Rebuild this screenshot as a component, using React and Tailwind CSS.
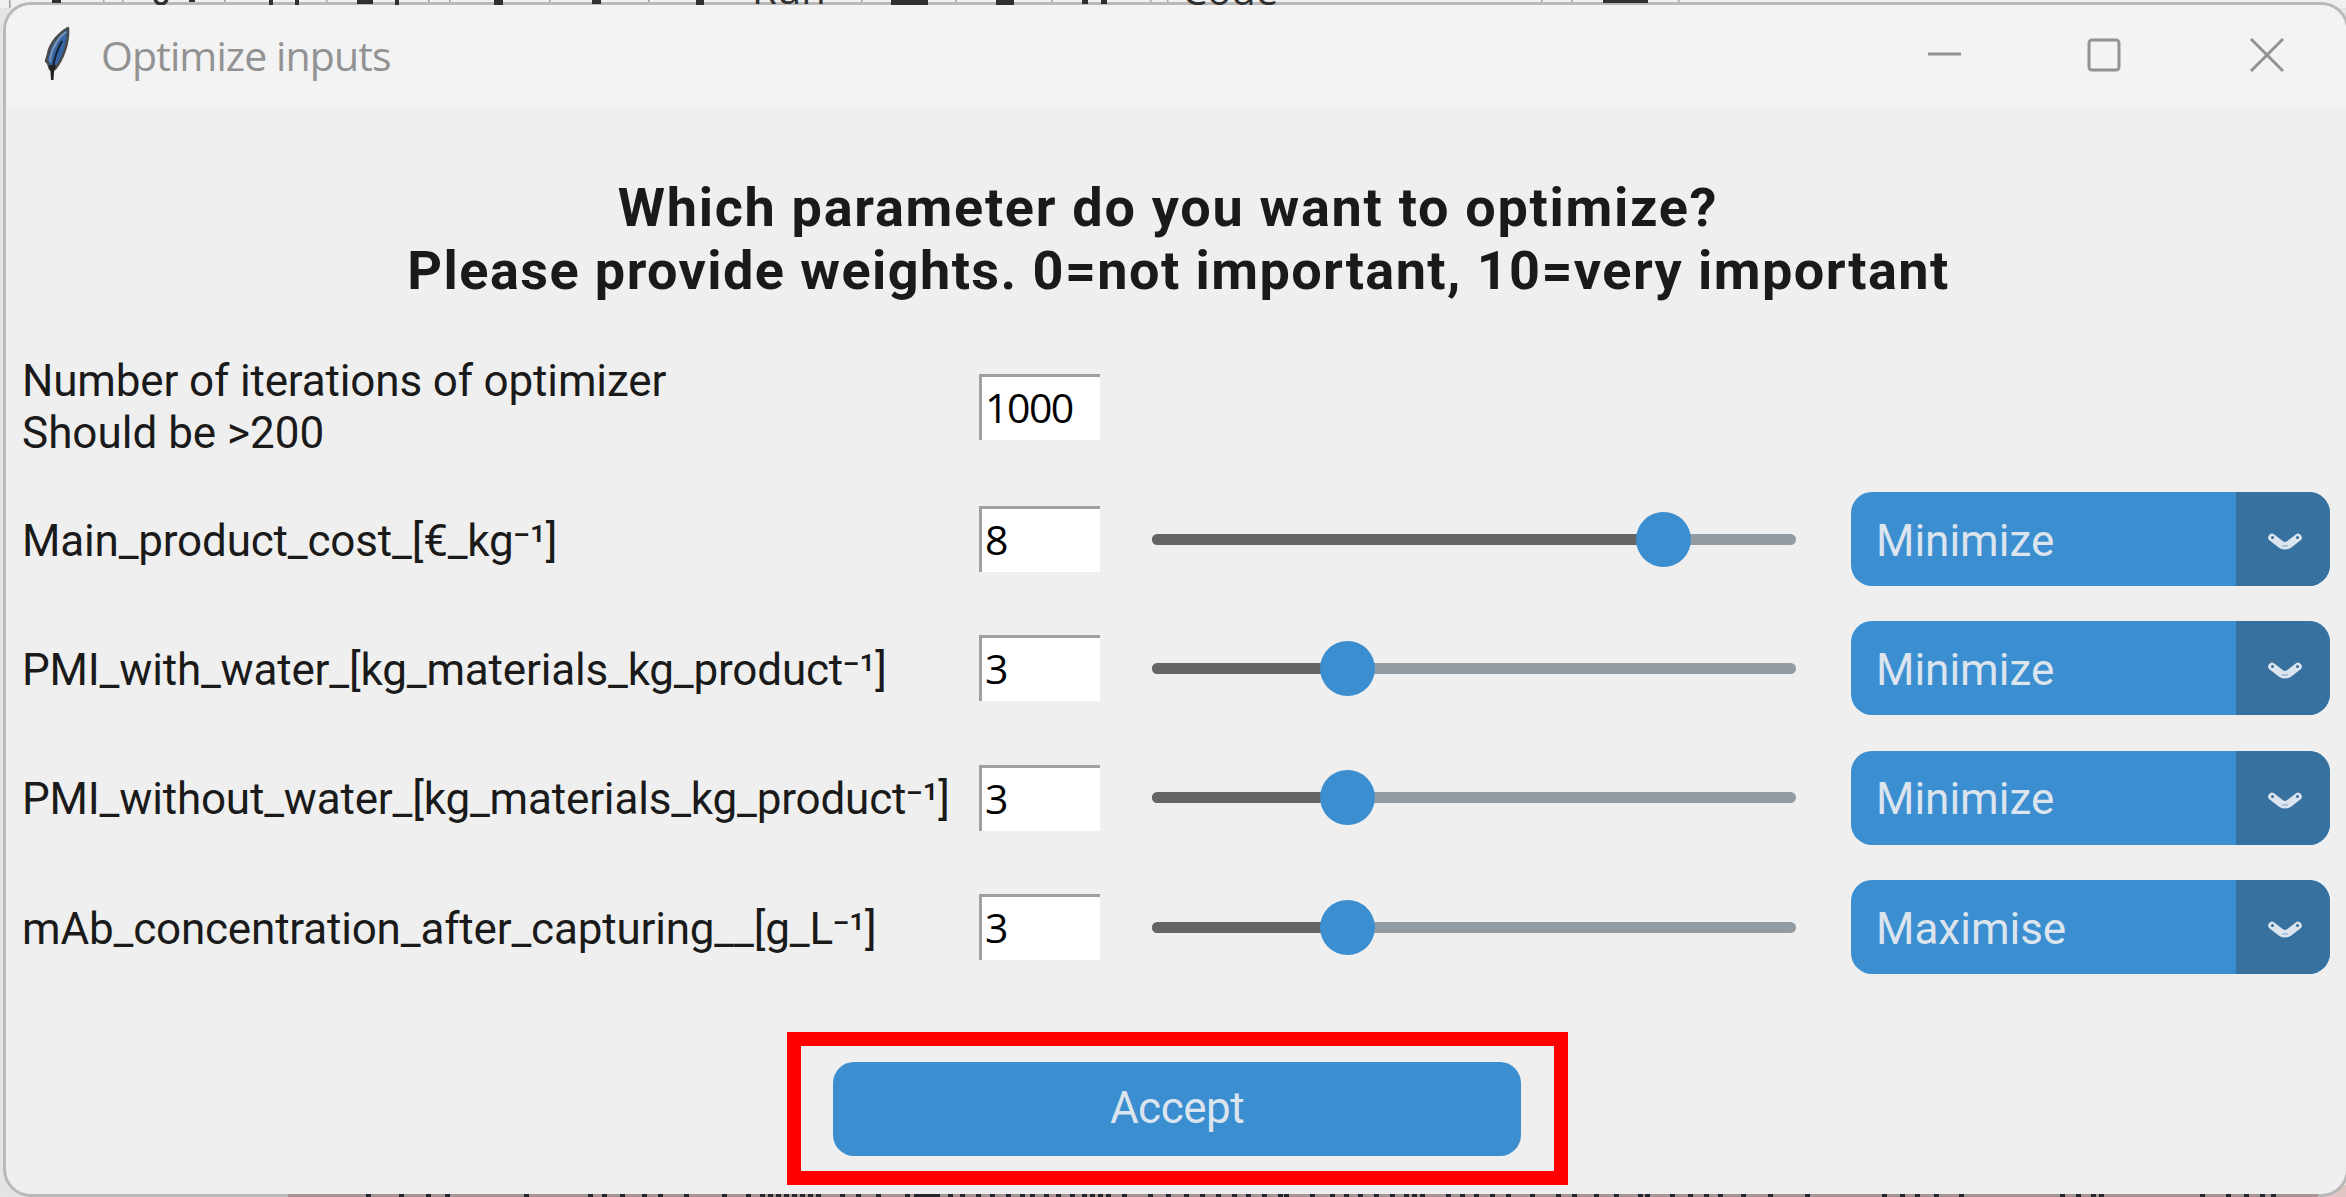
const rows = [
  { label: 'Main_product_cost_[€_kg⁻¹]', value: '8', left: 'left-[484px]', fill: 'w-[512px]', option: 'Minimize' },
  { label: 'PMI_with_water_[kg_materials_kg_product⁻¹]', value: '3', left: 'left-[168px]', fill: 'w-[195px]', option: 'Minimize' },
  { label: 'PMI_without_water_[kg_materials_kg_product⁻¹]', value: '3', left: 'left-[168px]', fill: 'w-[195px]', option: 'Minimize' },
  { label: 'mAb_concentration_after_capturing__[g_L⁻¹]', value: '3', left: 'left-[168px]', fill: 'w-[195px]', option: 'Maximise' },
];

// Vertical dividers of the toolbar that shows above the dialog.
const dividers = [9, 103, 122, 224, 326, 428, 449, 549, 648, 861, 955, 1051, 1150, 1167, 1541, 1571, 1678];
// Lower edges of the toolbar's glyphs: [x, width, height].
const glyphs = [
  [52, 9, 3], [189, 6, 2], [269, 4, 5], [295, 4, 5], [357, 16, 4], [395, 4, 5], [494, 9, 5], [592, 9, 4],
  [696, 8, 5], [891, 37, 5], [996, 18, 5], [1082, 6, 4], [1101, 6, 4], [1603, 45, 3],
];
// Tops of the text line that shows below the dialog.
const tops = [
  366, 399, 426, 445, 524, 588, 602, 620, 642, 658, 684, 722, 746, 760, 768, 776, 784, 792, 800, 808, 816, 840, 856, 876, 905, 914, 948, 960, 976, 990,
  1006, 1020, 1030, 1044, 1056, 1070, 1082, 1090, 1098, 1106, 1122, 1148, 1166, 1184, 1200, 1216, 1232, 1246, 1262, 1278, 1284, 1310, 1330, 1344, 1358,
  1374, 1390, 1404, 1412, 1420, 1446, 1460, 1474, 1490, 1506, 1530, 1556, 1572, 1594, 1614, 1638, 1645, 1670, 1688, 1704, 1718, 1741, 1768, 1805, 1882,
  1900, 1915, 1934, 1959, 2060, 2076, 2091, 2099, 2200, 2226, 2244, 2260, 2271,
];

function Feather() {
  return (
    <svg className="h-[56px] w-[32px]" viewBox="0 0 32 56">
      <path d="M28 2C20 6 10 17 8 28L6 35L8 37L10 43L15 43C23 33 29 17 28 2Z" fill="#3465a4" stroke="#4a4a48" strokeWidth="2.500" strokeLinejoin="round" />
      <path d="M26 6C19 11 11 22 10 36" fill="none" stroke="#7c94b0" strokeWidth="2" />
      <path d="M22 15C17 24 14 33 13 42" fill="none" stroke="#17212e" strokeWidth="2" />
      <path d="M9 39L16 39L14 46L13.500 54L11 54L10.500 46Z" fill="#222" />
    </svg>
  );
}

function Entry({ value }) {
  return (
    <div className="ml-[979px] flex h-[66px] w-[121px] items-center border-t-[3px] border-l-[3px] border-[#a0a0a0] bg-white pb-[2px] pl-[3px] font-['Open_Sans',sans-serif] text-[41px] leading-none tracking-[-1.500px] text-black">
      <span>{value}</span>
    </div>
  );
}

function Row({ label, value, left, fill, option }) {
  return (
    <div className="flex h-[129.300px] items-center">
      <div className="w-[17px] pt-[3px] pl-[16px] text-[44px] leading-[52px] tracking-[-0.180px] whitespace-nowrap text-[#1a1a1a]">{label}</div>
      <div className="-ml-[23px]"><Entry value={value} /></div>
      <div className="relative ml-[52px] h-[11px] w-[644px] rounded-full bg-[#939ba2]">
        <div className={`h-[11px] rounded-l-full bg-[#656565] ${fill}`} />
        <div className={`absolute -top-[22px] size-[55px] rounded-full bg-[#3b8ed0] ${left}`} />
      </div>
      <div className="ml-[55px] flex h-[94px] w-[479px] overflow-hidden rounded-[21px] bg-[#3b8ed0]">
        <div className="flex w-[385px] items-center pt-[3px] pl-[25px] text-[44px] text-[#dce4ee]">{option}</div>
        <div className="flex flex-1 items-center justify-center bg-[#36719f] pt-[6px] pl-[3px]">
          <svg className="h-[20px] w-[36px]" viewBox="0 0 36 20">
            <path d="M5 5.500L14 12.500Q18 15 22 12.500L31 5.500" fill="none" stroke="#dce4ee" strokeWidth="7.500" strokeLinecap="round" strokeLinejoin="round" />
            <circle cx="5.500" cy="5.500" r="1.500" fill="#36719f" />
            <circle cx="30.500" cy="5.500" r="1.500" fill="#36719f" />
            <path d="M15 14H21" stroke="#7fa3c2" strokeWidth="1" />
          </svg>
        </div>
      </div>
    </div>
  );
}

export default function App() {
  return (
    <div className="relative h-[1197px] w-[2346px] overflow-hidden bg-[#e4e4e4] font-['Roboto',sans-serif]">
      <svg className="absolute top-0 left-0 h-[8px] w-[2346px] bg-[#f0f0f0]" viewBox="0 0 2346 8">
        {dividers.map((x) => <rect key={x} x={x} y="0" width="1.500" height="8" fill="#a0a0a0" />)}
      </svg>
      <svg className="absolute bottom-0 left-0 h-[12px] w-[2346px]" viewBox="0 0 2346 12">
        <rect x="288" width="2058" height="12" fill="#e0c4c4" />
      </svg>
      <div className="absolute top-[2px] left-[3px] h-[1195px] w-[2346px] overflow-hidden rounded-[28px] border-[3px] border-[#b9b9b9] bg-[#efefef]">
        <div className="flex h-[102px] items-center bg-[#f3f3f3]">
          <div className="-mt-[4px] ml-[34px]"><Feather /></div>
          <div className="ml-[29px] w-[1800px] font-['Open_Sans',sans-serif] text-[41px] tracking-[-0.900px] text-[#929292]">Optimize inputs</div>
          <svg className="-mt-[2px] ml-[25px] h-[40px] w-[370px]" viewBox="0 0 370 40" fill="none" stroke="#929292" strokeWidth="3">
            <path d="M2 19H35" />
            <rect x="163" y="5" width="30" height="30" rx="3" />
            <path d="M325 4L357 36M357 4L325 36" />
          </svg>
        </div>
        <div className="flex h-[235px] flex-col items-center pt-[69px] text-[54px] leading-[63px] font-bold text-[#1a1a1a]">
          <div className="-ml-[16px] tracking-[1.710px] whitespace-nowrap">Which parameter do you want to optimize?</div>
          <div className="ml-[5px] tracking-[1.430px] whitespace-nowrap">Please provide weights. 0=not important, 10=very important</div>
        </div>
        <div className="flex h-[129px] items-center">
          <div className="w-[17px] pl-[16px] text-[44px] leading-[52px] tracking-[-0.150px] whitespace-nowrap text-[#1a1a1a]">
            <div>Number of iterations of optimizer</div>
            <div className="tracking-normal">Should be &gt;200</div>
          </div>
          <div className="-ml-[23px]"><Entry value="1000" /></div>
        </div>
        <div className="mt-[3.500px]">
          {rows.map((row) => <Row key={row.label} {...row} />)}
        </div>
        <div className="mt-[40px] ml-[781px] flex h-[153px] w-[781px] items-center border-[14px] border-[#ff0000] pt-[1px] pl-[32px]">
          <div className="flex h-[94px] w-[688px] items-center justify-center rounded-[21px] bg-[#3b8ed0] pb-[1px] text-[44px] tracking-[-0.500px] text-[#dce4ee]">Accept</div>
        </div>
      </div>
      <svg className="absolute top-0 left-0 h-[5px] w-[2346px]" viewBox="0 0 2346 5">
        {glyphs.map(([x, w, h]) => <rect key={x} x={x} y="0" width={w} height={h} fill="#303030" />)}
        <circle cx="161" cy="-2" r="6" fill="none" stroke="#303030" strokeWidth="3.500" />
        <text x="752" y="4" fontSize="40" fontFamily="Open Sans, sans-serif" fill="#303030">Run</text>
        <text x="1182" y="5" fontSize="40" fontFamily="Open Sans, sans-serif" fill="#303030">Code</text>
      </svg>
      <svg className="absolute bottom-0 left-0 h-[3px] w-[2346px]" viewBox="0 0 2346 3">
        <rect x="288" width="2030" height="3" fill="#a89494" />
        {tops.map((x) => <rect key={x} x={x} y="0" width={x === 914 ? 26 : 5} height="3" fill="#25252d" />)}
      </svg>
    </div>
  );
}
